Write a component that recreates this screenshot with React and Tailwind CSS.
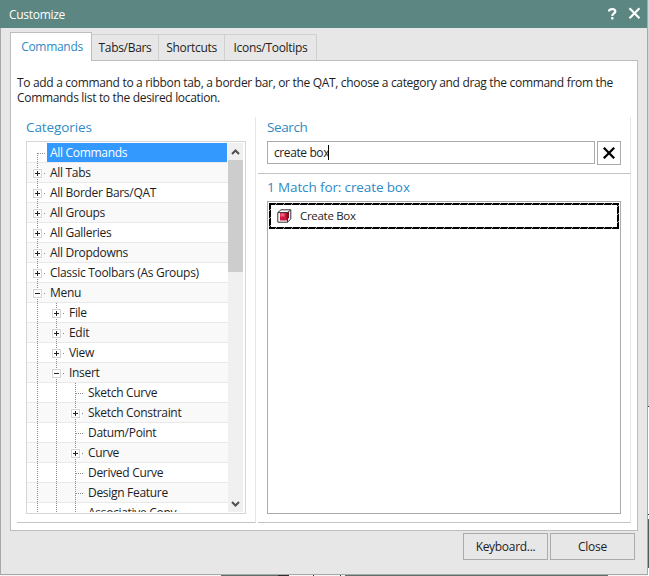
import { useState } from "react";
import clsx from "clsx";

const TABS = [
  { label: "Tabs/Bars", width: "w-[67px]" },
  { label: "Shortcuts", width: "w-[66px]" },
  { label: "Icons/Tooltips", width: "w-[92px]" },
];

// node: "leaf" | "closed" | "open"
const TREE = [
  { label: "All Commands", level: 0, node: "leaf", first: true, selected: true },
  { label: "All Tabs", level: 0, node: "closed" },
  { label: "All Border Bars/QAT", level: 0, node: "closed" },
  { label: "All Groups", level: 0, node: "closed" },
  { label: "All Galleries", level: 0, node: "closed" },
  { label: "All Dropdowns", level: 0, node: "closed" },
  { label: "Classic Toolbars (As Groups)", level: 0, node: "closed" },
  { label: "Menu", level: 0, node: "open" },
  { label: "File", level: 1, node: "closed" },
  { label: "Edit", level: 1, node: "closed" },
  { label: "View", level: 1, node: "closed" },
  { label: "Insert", level: 1, node: "open" },
  { label: "Sketch Curve", level: 2, node: "leaf" },
  { label: "Sketch Constraint", level: 2, node: "closed" },
  { label: "Datum/Point", level: 2, node: "leaf" },
  { label: "Curve", level: 2, node: "closed" },
  { label: "Derived Curve", level: 2, node: "leaf" },
  { label: "Design Feature", level: 2, node: "leaf" },
  { label: "Associative Copy", level: 2, node: "leaf" },
];

function Guide({ node, first }) {
  return (
    <svg width="19" height="20" className="shrink-0" shapeRendering="crispEdges" fill="none">
      <path d={first ? "M9.5 10V20" : "M9.5 0V20"} stroke="#8c8c8c" strokeDasharray="1 1" />
      {node && <path d="M10 10.5H18" stroke="#8c8c8c" strokeDasharray="1 1" />}
      {(node === "closed" || node === "open") && (
        <>
          <rect x="4" y="5" width="11" height="11" fill="#fff" />
          <rect x="5.5" y="6.5" width="8" height="8" fill="#fff" stroke="#d4d4d4" />
          <path d="M7 10.5H12" stroke="#222" />
          {node === "closed" && <path d="M9.5 8V13" stroke="#222" />}
        </>
      )}
    </svg>
  );
}

function TreeRow({ item, odd }) {
  return (
    <div className={clsx("flex h-5 shrink-0 border-b border-[#e9e9e9] pl-px", odd ? "bg-[#f9f9f9]" : "bg-white")}>
      {Array.from({ length: item.level }, (_, i) => (
        <Guide key={i} />
      ))}
      <Guide node={item.node} first={item.first} />
      <span
        className={clsx(
          "h-[19px] flex-1 whitespace-nowrap pl-[3px] leading-5",
          item.selected && "mr-px bg-[#3399ff] text-white"
        )}
      >
        {item.label}
      </span>
    </div>
  );
}

function BoxIcon() {
  return (
    <svg width="15" height="14" viewBox="0 0 15 14" className="shrink-0" fill="none">
      <path d="M3 3.5L5.5 3H12V8.5L9.5 11.5H3Z" fill="#d3163d" />
      <path d="M3.5 4.2H7.5V7.5H3.5Z" fill="#f2607c" />
      <path d="M9.5 4.5L12 3V8.5L9.5 11.5Z" fill="#7d0c28" />
      <path d="M.8 3.6H10.5V13.2H.8Z M.8 3.6L4 .8H13.8V10L10.5 13.2 M10.5 3.6L13.8 .8" stroke="#333" />
    </svg>
  );
}

// Focus frame: solid black with thin slanted gaps
function FocusFrame() {
  return (
    <svg width="350" height="26" className="pointer-events-none absolute inset-0" fill="none">
      <defs>
        <pattern id="slant" width="8" height="8" patternUnits="userSpaceOnUse">
          <rect width="8" height="8" fill="#000" />
          <path d="M0 8L8 0" stroke="#ccc" strokeWidth=".8" />
        </pattern>
      </defs>
      <rect x="1" y="1" width="348" height="24" stroke="url(#slant)" strokeWidth="2" />
    </svg>
  );
}

export default function App() {
  const [query, setQuery] = useState("create box");

  return (
    <div className="flex h-[576px] w-[649px] flex-col overflow-hidden bg-white font-['Open_Sans','Noto_Sans',sans-serif] text-[12px] tracking-[-0.3px] text-[#1e1e1e]">
      <div className="flex h-[575px]">
        <div className="flex w-[648px] flex-col border-r border-b border-[#a8a8a8] bg-[#e7e7e7]">
          {/* Title bar */}
          <header className="flex h-7 shrink-0 items-center bg-[#5b8682] pl-[9px] pr-[7px] text-white">
            <span className="flex-1 pt-0.5 text-[12px]">Customize</span>
            <svg width="33" height="14" viewBox="0 0 33 14" fill="none" stroke="#fff" strokeWidth="2.3">
              <path d="M2 4.5C2 1.2 8.7 1.2 8.3 4.5C8 6.6 5.3 6.2 5.3 9" />
              <path d="M5.3 10V12.5" />
              <path d="M22.5 1.3L32.5 11.3M32.5 1.3L22.5 11.3" strokeWidth="2.2" />
            </svg>
          </header>

          <div className="flex flex-1 flex-col border-l border-[#a8a8a8] pl-[9px] pr-[9px] pt-1">
            <nav className="z-10 -mb-px flex h-[29px] items-end">
              <button className="h-[29px] w-[82px] border border-b-0 border-[#bdbdbd] bg-white pl-0.5 text-[#2f8ac6]">
                Commands
              </button>
              {TABS.map((tab) => (
                <button
                  key={tab.label}
                  className={clsx("mb-px h-[26px] border-t border-r border-[#d0d0d0] bg-[#e7e7e7] pt-px", tab.width)}
                >
                  {tab.label}
                </button>
              ))}
            </nav>

            <main className="flex h-[471px] flex-col border border-[#bdbdbd] bg-white pl-1.5 pr-[6px] pt-[14px]">
              <div className="whitespace-nowrap leading-[15px] tracking-[-0.32px]">
                To add a command to a ribbon tab, a border bar, or the QAT, choose a category and drag the command from the
                <br />
                Commands list to the desired location.
              </div>

              <div className="mt-3 flex h-[406px] gap-[2px]">
                <section className="flex w-[239px] shrink-0 flex-col border-r border-b border-r-[#e6e6e6] border-b-[#c4c4c4] pl-[9px] pr-[9px]">
                  <h2 className="h-[24px] text-[13.5px] leading-[20px] tracking-[-0.1px] text-[#2f8ac6]">Categories</h2>
                  <div className="flex h-[373px] border border-[#d6d6d6] py-px pr-0.5">
                    <div className="flex flex-1 flex-col overflow-hidden">
                      {TREE.map((item, i) => (
                        <TreeRow key={item.label} item={item} odd={i % 2 === 1} />
                      ))}
                    </div>
                    <div className="flex w-[15px] flex-col items-center justify-between bg-[#f0f0f0]">
                      <svg width="15" height="17" fill="none" stroke="#505050" strokeWidth="2">
                        <path d="M4 11L7.5 7.5L11 11" />
                      </svg>
                      <div className="mb-auto h-[112px] w-full bg-[#cdcdcd]" />
                      <svg width="15" height="17" fill="none" stroke="#505050" strokeWidth="2">
                        <path d="M4 7L7.5 10.5L11 7" />
                      </svg>
                    </div>
                  </div>
                </section>

                <div className="flex w-[373px] shrink-0 flex-col">
                  <section className="h-[57px] border-r border-b border-r-[#e6e6e6] border-b-[#c4c4c4] px-[9px]">
                    <h2 className="h-[24px] text-[13.5px] leading-[20px] tracking-[-0.4px] text-[#2f8ac6]">Search</h2>
                    <div className="flex gap-0.5">
                      <div className="flex h-[23px] w-[328px] items-center border border-[#ababab] pl-1.5">
                        <input
                          className="w-[54px] bg-transparent tracking-[-0.4px] outline-none"
                          value={query}
                          onChange={(e) => setQuery(e.target.value)}
                        />
                        <span className="h-[15px] w-px bg-black" />
                      </div>
                      <button className="flex h-6 w-6 items-center justify-center border border-[#ababab]">
                        <svg width="14" height="12" fill="none" stroke="#000" strokeWidth="2.3">
                          <path d="M1.8 .8L12.2 11.2M12.2 .8L1.8 11.2" />
                        </svg>
                      </button>
                    </div>
                  </section>
                  <section className="flex-1 border-r border-b border-r-[#e6e6e6] border-b-[#c4c4c4] px-[9px] pt-[3px]">
                    <h2 className="h-6 text-[13.5px] leading-[20px] tracking-[-0.12px] text-[#2f8ac6]">1 Match for: {query}</h2>
                    <div className="h-[313px] border border-[#ababab] p-px">
                      <div className="relative flex h-[26px] items-center pl-2">
                        <FocusFrame />
                        <BoxIcon />
                        <span className="pl-[8px] text-[11.5px]">Create Box</span>
                      </div>
                    </div>
                  </section>
                </div>
              </div>
            </main>

            <footer className="mt-0.5 flex justify-end gap-0.5 pr-[3px]">
              <button className="h-[27px] w-[85px] border border-[#ababab]">Keyboard...</button>
              <button className="h-[27px] w-[85px] border border-[#ababab]">Close</button>
            </footer>
          </div>
        </div>
        {/* Window underneath, showing along the right edge */}
        <div className="flex w-px flex-col bg-white">
          <div className="h-[406px] bg-[#d6d6d6]" />
          <div className="h-px bg-[#333]" />
          <div className="mt-[107px] h-px bg-[#333]" />
          <div className="mt-1 h-[49px] bg-[#4d5f5b]" />
        </div>
      </div>
      {/* ...and along the bottom edge */}
      <div className="flex h-px bg-[#f2f7f6] pl-[221px]">
        <div className="w-[57px] bg-[#5d6f6a]" />
        <div className="w-[11px] bg-[#2d2d2d]" />
        <div className="ml-6 w-px bg-[#333]" />
        <div className="ml-[26px] w-px bg-[#333]" />
        <div className="ml-1 w-[263px] bg-[#5d6f6a]" />
      </div>
    </div>
  );
}
